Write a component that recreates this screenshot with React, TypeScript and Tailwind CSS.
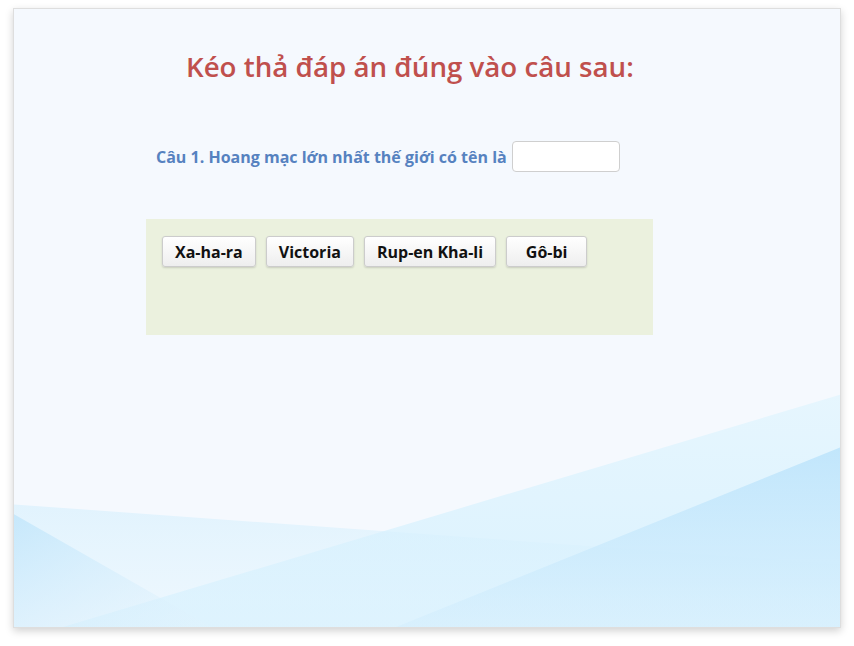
import React from 'react';

const answers = ['Xa-ha-ra', 'Victoria', 'Rup-en Kha-li', 'Gô-bi'];

const Background: React.FC = () => (
  <svg
    className="absolute inset-0 w-full h-full pointer-events-none"
    viewBox="0 0 828 620"
    preserveAspectRatio="none"
  >
    <defs>
      <linearGradient id="gA" x1="0" y1="0" x2="0" y2="1">
        <stop offset="0" stopColor="#d4effd" stopOpacity="0.6" />
        <stop offset="1" stopColor="#e3f5fe" stopOpacity="0.4" />
      </linearGradient>
      <linearGradient id="gB" x1="0" y1="0" x2="1" y2="1">
        <stop offset="0" stopColor="#c2e6fb" stopOpacity="0.85" />
        <stop offset="1" stopColor="#e2f3fd" stopOpacity="0.3" />
      </linearGradient>
      <linearGradient id="gC" x1="0" y1="0" x2="0" y2="1">
        <stop offset="0" stopColor="#e2f5fe" stopOpacity="0.8" />
        <stop offset="1" stopColor="#d4f0fe" stopOpacity="0.8" />
      </linearGradient>
      <linearGradient id="gD" x1="0" y1="0" x2="0" y2="1">
        <stop offset="0" stopColor="#b6e1fb" stopOpacity="0.75" />
        <stop offset="1" stopColor="#d4eefd" stopOpacity="0.55" />
      </linearGradient>
    </defs>
    <polygon points="49,620 828,387 828,620" fill="url(#gC)" />
    <polygon points="0,497 828,557 828,620 0,620" fill="url(#gA)" />
    <polygon points="0,507 198,620 0,620" fill="url(#gB)" />
    <polygon points="383,620 828,440 828,620" fill="url(#gD)" />
  </svg>
);

const App: React.FC = () => {
  return (
    <div className="w-[854px] h-[646px] bg-white pt-[8px] pl-[13px]" style={{ fontFamily: '"Open Sans", "Noto Sans", sans-serif' }}>
      <div className="relative w-[828px] h-[620px] overflow-hidden bg-[#f5f9fe] border border-[#dedede] shadow-[0_3px_8px_rgba(0,0,0,0.18)]">
        <Background />

        <div className="relative flex flex-col">
          {/* Title */}
          <h1 className="mt-[38px] ml-[172px] text-[27.7px] font-semibold text-[#c0504d] leading-[38px]">
            Kéo thả đáp án đúng vào câu sau:
          </h1>

          {/* Question */}
          <div className="mt-[56px] ml-[142px] flex items-center gap-[5px]">
            <span className="text-[16px] font-bold text-[#5682c0] leading-[22px]">
              Câu 1. Hoang mạc lớn nhất thế giới có tên là
            </span>
            <div className="w-[108px] h-[31px] bg-white border border-[#cfcfcf] rounded-[4px]" />
          </div>

          {/* Answer pool */}
          <div className="mt-[47px] ml-[132px] w-[507px] h-[116px] bg-[#ebf1de] pt-[17px] pl-[16px] flex items-start gap-[10px]">
            {answers.map((a) => (
              <button
                key={a}
                className="h-[31px] min-w-[81px] px-[12px] rounded-[3px] border border-[#cccccc] bg-gradient-to-b from-white to-[#eeeeee] shadow-[0_1px_2px_rgba(0,0,0,0.15)] text-[16px] font-bold text-[#111111]"
              >
                {a}
              </button>
            ))}
          </div>
        </div>
      </div>
    </div>
  );
};

export default App;
